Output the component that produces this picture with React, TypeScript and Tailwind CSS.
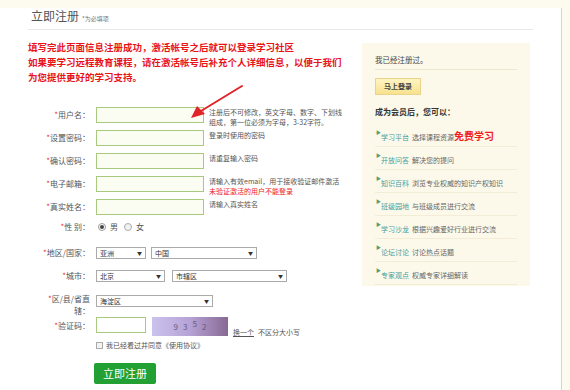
const font = { fontFamily: '"Noto Sans CJK SC", "Liberation Sans", sans-serif' };

const Field = ({ label, hint, hint2, hint2Red }: { label: string; hint?: string; hint2?: string; hint2Red?: boolean }) => (
  <div className="flex h-[23px] items-start">
    <div className="w-[62px] pt-[3px] text-right text-[8px] leading-[10px] text-[#555]">
      <span className="text-[#e33]">*</span>
      {label}：
    </div>
    <div className="ml-[6px] h-[16px] w-[108px] border border-[#a9c97f] bg-[#fbfdf3]" />
    <div className="ml-[5px] text-[7px] leading-[10px] text-[#555]">
      {hint && <div>{hint}</div>}
      {hint2 && <div className={hint2Red ? "text-[#e22]" : ""}>{hint2}</div>}
    </div>
  </div>
);

const Sel = ({ text, w }: { text: string; w: string }) => (
  <div className={`flex h-[12px] items-center justify-between border border-[#aaa] bg-white px-[3px] text-[7px] text-[#333] ${w}`}>
    <span>{text}</span>
    <span className="text-[5px]">▼</span>
  </div>
);

const items = [
  ["学习平台", "选择课程资源"],
  ["开放问答", "解决您的提问"],
  ["知识百科", "浏览专业权威的知识产权知识"],
  ["班级园地", "与班级成员进行交流"],
  ["学习沙龙", "根据兴趣爱好行业进行交流"],
  ["论坛讨论", "讨论热点话题"],
  ["专家观点", "权威专家详细解读"],
];

export default function App() {
  return (
    <div className="relative h-[390px] w-[570px] overflow-hidden bg-[#fdfbef] pt-[8px]" style={font}>
      <div className="h-full w-[562px] border-r border-[#d5d5d5] bg-white px-[28px]">
        <div className="flex items-end border-b border-[#e8e8e8] pb-[6px] pl-[3px] pt-[1px]">
          <span className="text-[12px] leading-[14px] text-[#555]">立即注册</span>
          <span className="ml-[3px] text-[6px] leading-[9px] text-[#777]">*为必填项</span>
        </div>
        <div className="flex items-start">
          <div className="w-[334px]">
            <div className="mt-[10px] text-[9.5px] font-bold leading-[15px] text-[#e8141a]">
              <div>填写完此页面信息注册成功，激活帐号之后就可以登录学习社区</div>
              <div className="whitespace-nowrap">如果要学习远程教育课程，请在激活帐号后补充个人详细信息，以便于我们</div>
              <div>为您提供更好的学习支持。</div>
            </div>
            <div className="mt-[22px]">
              <Field label="用户名" hint="注册后不可修改，英文字母、数字、下划线" hint2="组成，第一位必须为字母，3-32字符。" />
              <Field label="设置密码" hint="登录时使用的密码" />
              <Field label="确认密码" hint="请重复输入密码" />
              <Field label="电子邮箱" hint="请输入有效email，用于接收验证邮件激活" hint2="未验证激活的用户不能登录" hint2Red />
              <Field label="真实姓名" hint="请输入真实姓名" />
              <div className="flex h-[20px] items-start text-[8px] leading-[10px] text-[#555]">
                <div className="w-[62px] text-right"><span className="text-[#e33]">*</span>性 别：</div>
                <div className="ml-[8px] flex items-center gap-[4px]">
                  <span className="flex h-[8px] w-[8px] items-center justify-center rounded-full border border-[#999]"><span className="h-[4px] w-[4px] rounded-full bg-[#444]" /></span>
                  <span>男</span>
                  <span className="ml-[2px] h-[8px] w-[8px] rounded-full border border-[#aaa] bg-[#f2f2f2]" />
                  <span>女</span>
                </div>
              </div>
              <div className="flex h-[22px] items-center text-[8px] text-[#555]">
                <div className="w-[62px] text-right"><span className="text-[#e33]">*</span>地区/国家：</div>
                <div className="ml-[6px] flex gap-[5px]">
                  <Sel text="亚洲" w="w-[50px]" />
                  <Sel text="中国" w="w-[106px]" />
                </div>
              </div>
              <div className="flex h-[24px] items-center text-[8px] text-[#555]">
                <div className="w-[62px] text-right"><span className="text-[#e33]">*</span>城市：</div>
                <div className="ml-[6px] flex gap-[7px]">
                  <Sel text="北京" w="w-[69px]" />
                  <Sel text="市辖区" w="w-[115px]" />
                </div>
              </div>
              <div className="flex h-[29px] items-start pt-[5px] text-[8px] leading-[12px] text-[#555]">
                <div className="w-[62px] text-right"><span className="text-[#e33]">*</span>区/县/省直<br />辖：</div>
                <div className="ml-[6px] mt-[2px]">
                  <Sel text="海淀区" w="w-[117px]" />
                </div>
              </div>
              <div className="flex h-[23px] items-start text-[8px] text-[#555]">
                <div className="w-[62px] pt-[3px] text-right"><span className="text-[#e33]">*</span>验证码：</div>
                <div className="ml-[6px] h-[16px] w-[50px] border border-[#a9c97f] bg-white" />
                <div className="ml-[6px] flex h-[19px] w-[76px] items-center justify-center gap-[5px] bg-gradient-to-r from-[#cbc3ee] via-[#b6a2d6] to-[#876a93] text-[8px] text-[#6a5a7a]">
                  <span>9</span><span>3</span><span className="-mt-[5px]">5</span><span>2</span>
                </div>
                <div className="ml-[5px] mt-[10px] text-[7px] text-[#555]">
                  <span className="underline">换一个</span>
                  <span className="ml-[4px]">不区分大小写</span>
                </div>
              </div>
              <div className="ml-[68px] flex items-center gap-[3px] text-[7px] text-[#555]">
                <span className="h-[7px] w-[7px] border border-[#aaa] bg-[#f3f3f3]" />
                <span>我已经看过并同意《使用协议》</span>
              </div>
              <button className="ml-[66px] mt-[12px] h-[21px] w-[62px] rounded-[2px] bg-[#23a034] text-[11px] text-white">立即注册</button>
            </div>
          </div>
          <div className="mt-[13px] h-[243px] w-[168px] bg-[#fdf9ea] px-[13px] pt-[12px]">
            <div className="border-b border-[#efe8d0] pb-[4px] text-[7.5px] leading-[10px] text-[#444]">我已经注册过。</div>
            <button className="mt-[6px] h-[17px] w-[46px] border border-[#e8d48a] bg-gradient-to-b from-[#fff4c2] to-[#f8e18e] text-[7px] font-bold text-[#444]">马上登录</button>
            <div className="mt-[11px] text-[8px] font-bold leading-[12px] text-[#333]">成为会员后，您可以：</div>
            <div className="mt-[6px]">
              {items.map(([a, b], i) => (
                <div key={a} className="relative flex h-[23px] items-center border-b border-[#f3ecd6] pl-[6px] text-[7px] text-[#666]">
                  <span className="absolute left-[1px] top-[4px] text-[5px] text-[#5a9e6e]">▶</span>
                  <span className="mt-[4px] text-[#3f9fa2]">{a}</span>
                  <span className="ml-[3px] mt-[4px]">{b}</span>
                  {i === 0 && <span className="mt-[2px] text-[10px] font-bold text-[#f01c1c]">免费学习</span>}
                </div>
              ))}
            </div>
          </div>
        </div>
      </div>
      <svg className="absolute left-0 top-0" width="570" height="390">
        <line x1="242" y1="86" x2="201" y2="111" stroke="#e0242a" strokeWidth="2" strokeLinecap="round" />
        <polygon points="191,118 197,106 205,114" fill="#e0242a" />
      </svg>
    </div>
  );
}
